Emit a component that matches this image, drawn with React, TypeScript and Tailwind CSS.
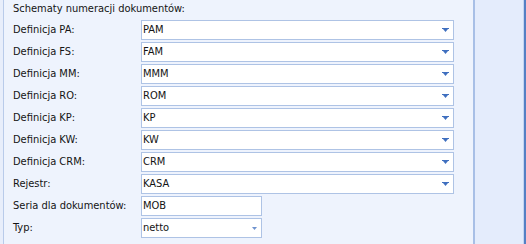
import React from "react";

const rows = [
  { label: "Definicja PA:", value: "PAM" },
  { label: "Definicja FS:", value: "FAM" },
  { label: "Definicja MM:", value: "MMM" },
  { label: "Definicja RO:", value: "ROM" },
  { label: "Definicja KP:", value: "KP" },
  { label: "Definicja KW:", value: "KW" },
  { label: "Definicja CRM:", value: "CRM" },
  { label: "Rejestr:", value: "KASA" },
];

function Arrow({ dim }: { dim?: boolean }) {
  if (dim) {
    return (
      <svg width="5" height="3" viewBox="0 0 5 3" className="shrink-0">
        <path d="M0 0h5L2.5 3z" fill="#6f93cf" />
      </svg>
    );
  }
  return (
    <svg width="7" height="4" viewBox="0 0 7 4" className="shrink-0">
      <rect x="0" y="0" width="7" height="1" fill="#3f6fbf" />
      <path d="M1 1h5L3.5 4z" fill="#3f6fbf" />
    </svg>
  );
}

function Combo({ value, width, dim }: { value: string; width: string; dim?: boolean }) {
  return (
    <div className={`${width} h-[20px] border border-[#aec3e5] bg-white flex items-center justify-between pl-[1px] pr-[4px]`}>
      <span>{value}</span>
      <Arrow dim={dim} />
    </div>
  );
}

export default function App() {
  return (
    <div
      className="w-[526px] h-[244px] flex bg-[#e8eefb] text-[11px] text-[#141414] overflow-hidden"
      style={{ fontFamily: 'Tahoma, "DejaVu Sans Condensed", "DejaVu Sans", sans-serif' }}
    >
      <div className="w-[3px] shrink-0" />
      <div className="w-[472px] shrink-0 border-l border-[#b9cbea] border-r-2 border-r-[#a8bfe6] bg-[#eef3fd] pl-[9px]">
        <div className="h-[20px] flex items-center pb-[2px]">Schematy numeracji dokumentów:</div>
        <div className="flex flex-col gap-[2px]">
          {rows.map((r) => (
            <div key={r.label} className="flex items-center">
              <div className="w-[128px]">{r.label}</div>
              <Combo value={r.value} width="w-[313px]" />
            </div>
          ))}
          <div className="flex items-center">
            <div className="w-[128px]">Seria dla dokumentów:</div>
            <div className="w-[121px] h-[20px] border border-[#aec3e5] bg-white flex items-center pl-[1px]">MOB</div>
          </div>
          <div className="flex items-center">
            <div className="w-[128px]">Typ:</div>
            <Combo value="netto" width="w-[121px]" dim />
          </div>
        </div>
      </div>
      <div className="flex-1 bg-[#e4ecfc] border-r-2 border-r-[#5580c4]">
        <div className="h-full w-full border-r border-r-[#c4d5f2]" />
      </div>
    </div>
  );
}
